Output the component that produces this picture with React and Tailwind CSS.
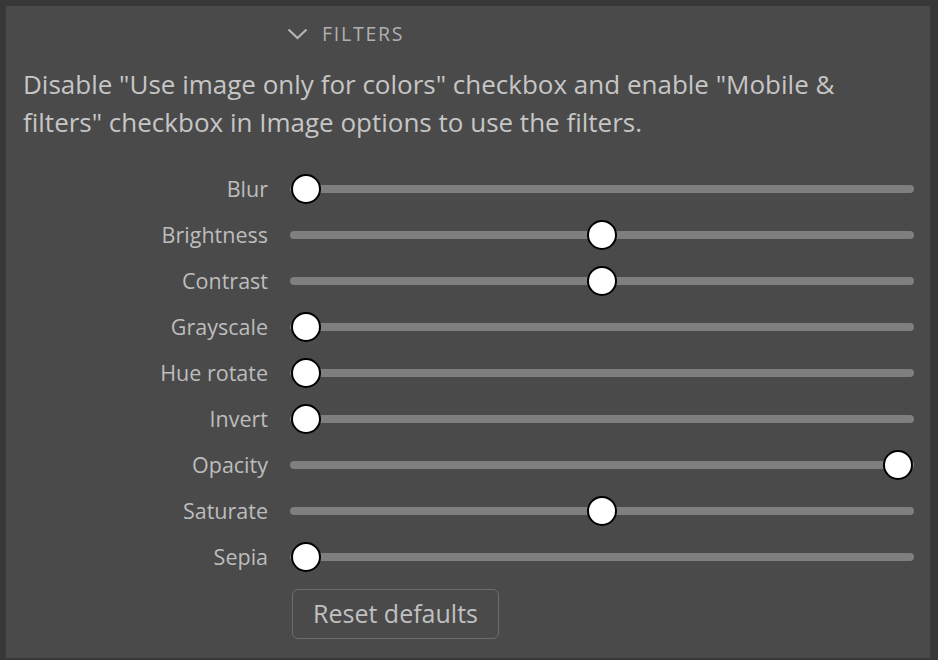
import React from 'react'

const filters = [
  { name: 'Blur', value: 0 },
  { name: 'Brightness', value: 50 },
  { name: 'Contrast', value: 50 },
  { name: 'Grayscale', value: 0 },
  { name: 'Hue rotate', value: 0 },
  { name: 'Invert', value: 0 },
  { name: 'Opacity', value: 100 },
  { name: 'Saturate', value: 50 },
  { name: 'Sepia', value: 0 },
]

function Slider({ value }) {
  return (
    <div className="relative h-[30px] flex-1 flex items-center">
      <div className="h-2 w-full rounded-full bg-[#7f7f7f]"></div>
      <div
        className="absolute top-0 h-[30px] w-[30px] rounded-full border-2 border-black bg-white"
        style={{ left: `calc(${value / 100} * (100% - 32px) + 1px)` }}
      ></div>
    </div>
  )
}

function App() {
  return (
    <div className="h-[660px] w-[938px] bg-[#383838] pl-[6px] pr-[8px] pt-[6px] pb-[2px]" style={{ fontFamily: '"Open Sans", sans-serif' }}>
      <div className="h-full bg-[#4a4a4a] text-[#c4c4c4]">
        <div className="flex items-center pl-[281px] pt-[16px] h-[40px]">
          <svg width="21" height="12" viewBox="0 0 21 12" fill="none" stroke="#b4b4b4" strokeWidth="2.2">
            <path d="M1.5 1.5 L10.5 10 L19.5 1.5" />
          </svg>
          <span className="ml-[14px] text-[19.5px] tracking-[0.09em] text-[#b0b0b0]">FILTERS</span>
        </div>
        <p className="mt-[19px] px-[17px] text-[26px] leading-[38px] text-[#c6c6c6]">
          Disable "Use image only for colors" checkbox and enable "Mobile &amp; filters" checkbox in Image options to use the filters.
        </p>
        <div className="mt-[33px] flex flex-col gap-[16px] pr-[16px]">
          {filters.map((f) => (
            <div key={f.name} className="flex h-[30px] items-center">
              <div className="w-[263px] pr-[1px] text-right text-[21.5px] leading-[30px] text-[#bdbdbd]">{f.name}</div>
              <div className="ml-[21px] flex flex-1">
                <Slider value={f.value} />
              </div>
            </div>
          ))}
        </div>
        <div className="mt-[17px] pl-[286px]">
          <button className="h-[50px] w-[207px] rounded-[6px] border-[1.5px] border-[#6c6c6c] text-[25px] text-[#c0c0c0]">
            Reset defaults
          </button>
        </div>
      </div>
    </div>
  )
}

export default App
